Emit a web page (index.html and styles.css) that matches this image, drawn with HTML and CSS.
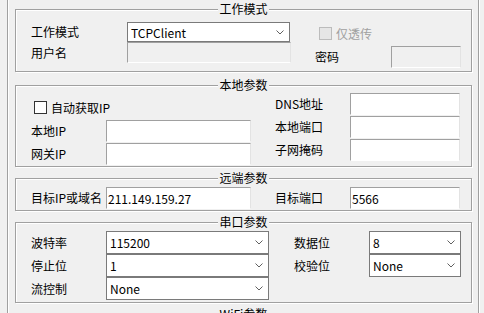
FILE: index.html
```html
<!DOCTYPE html>
<html lang="zh-CN">
<head>
    <meta charset="UTF-8">
    <meta name="viewport" content="width=device-width, initial-scale=1.0">
    <title>参数设置</title>
    <link rel="stylesheet" href="styles.css">
</head>
<body>

<div class="panel">

    <!-- 工作模式 -->
    <div class="group">
        <div class="group-title">工作模式</div>
        <div class="group-body g-work">
            <div class="col">
                <div class="field">
                    <label class="lbl lbl-wide">工作模式</label>
                    <div class="combo combo-mode"><span>TCPClient</span><svg width="8" height="5" viewBox="0 0 8 5"><polyline points="0.5,0.5 4,4 7.5,0.5" fill="none" stroke="#606060" stroke-width="1"/></svg></div>
                </div>
                <div class="field">
                    <label class="lbl lbl-wide">用户名</label>
                    <input type="text" class="edit edit-user" disabled>
                </div>
            </div>
            <div class="col col-right-work">
                <label class="check check-disabled check-trans"><span class="box"></span>仅透传</label>
                <div class="field field-pwd">
                    <label class="lbl lbl-pwd">密码</label>
                    <input type="text" class="edit edit-pwd" disabled>
                </div>
            </div>
        </div>
    </div>

    <!-- 本地参数 -->
    <div class="group">
        <div class="group-title">本地参数</div>
        <div class="group-body g-local">
            <div class="col">
                <label class="check check-auto"><span class="box"></span>自动获取IP</label>
                <div class="stack stack-local">
                    <div class="field">
                        <label class="lbl">本地IP</label>
                        <input type="text" class="edit edit-left">
                    </div>
                    <div class="field">
                        <label class="lbl">网关IP</label>
                        <input type="text" class="edit edit-left">
                    </div>
                </div>
            </div>
            <div class="col col-right">
                <div class="stack">
                    <div class="field">
                        <label class="lbl">DNS地址</label>
                        <input type="text" class="edit edit-right">
                    </div>
                    <div class="field">
                        <label class="lbl">本地端口</label>
                        <input type="text" class="edit edit-right">
                    </div>
                    <div class="field">
                        <label class="lbl">子网掩码</label>
                        <input type="text" class="edit edit-right">
                    </div>
                </div>
            </div>
        </div>
    </div>

    <!-- 远端参数 -->
    <div class="group">
        <div class="group-title">远端参数</div>
        <div class="group-body g-remote">
            <div class="col">
                <div class="field">
                    <label class="lbl">目标IP或域名</label>
                    <input type="text" class="edit edit-left" value="211.149.159.27">
                </div>
            </div>
            <div class="col col-right">
                <div class="field">
                    <label class="lbl">目标端口</label>
                    <input type="text" class="edit edit-right" value="5566">
                </div>
            </div>
        </div>
    </div>

    <!-- 串口参数 -->
    <div class="group">
        <div class="group-title">串口参数</div>
        <div class="group-body g-serial">
            <div class="col">
                <div class="field">
                    <label class="lbl">波特率</label>
                    <div class="combo combo-left"><span>115200</span><svg width="8" height="5" viewBox="0 0 8 5"><polyline points="0.5,0.5 4,4 7.5,0.5" fill="none" stroke="#606060" stroke-width="1"/></svg></div>
                </div>
                <div class="field">
                    <label class="lbl">停止位</label>
                    <div class="combo combo-left"><span>1</span><svg width="8" height="5" viewBox="0 0 8 5"><polyline points="0.5,0.5 4,4 7.5,0.5" fill="none" stroke="#606060" stroke-width="1"/></svg></div>
                </div>
                <div class="field">
                    <label class="lbl">流控制</label>
                    <div class="combo combo-left"><span>None</span><svg width="8" height="5" viewBox="0 0 8 5"><polyline points="0.5,0.5 4,4 7.5,0.5" fill="none" stroke="#606060" stroke-width="1"/></svg></div>
                </div>
            </div>
            <div class="col col-right-serial">
                <div class="field">
                    <label class="lbl">数据位</label>
                    <div class="combo combo-right"><span>8</span><svg width="8" height="5" viewBox="0 0 8 5"><polyline points="0.5,0.5 4,4 7.5,0.5" fill="none" stroke="#606060" stroke-width="1"/></svg></div>
                </div>
                <div class="field">
                    <label class="lbl">校验位</label>
                    <div class="combo combo-right"><span>None</span><svg width="8" height="5" viewBox="0 0 8 5"><polyline points="0.5,0.5 4,4 7.5,0.5" fill="none" stroke="#606060" stroke-width="1"/></svg></div>
                </div>
            </div>
        </div>
    </div>

    <!-- WiFi参数 -->
    <div class="group">
        <div class="group-title">WiFi参数</div>
        <div class="group-body g-wifi"></div>
    </div>

</div>

</body>
</html>
```

FILE: styles.css
```css
/* 参数设置面板 */
body {
    margin: 0;
    background-color: #f0f0f0;
    font-family: "Noto Sans CJK SC", "Noto Sans", sans-serif;
    font-size: 12px;
    color: #000;
    overflow: hidden;
}
.panel {
    box-sizing: border-box;
    width: 472px;
    height: 313px;
    margin-left: 7px;
    padding-top: 9px;
    border-left: 1px solid #a0a0a0;
    border-right: 1px solid #a0a0a0;
    box-shadow: inset 1px 0 0 #fff, 1px 0 0 #fff;
    overflow: hidden;
}

/* 分组框 */
.group {
    box-sizing: border-box;
    width: 457px;
    margin-left: 7px;
    border: 1px solid #a0a0a0;
    box-shadow: inset 1px 1px 0 #fff, 1px 1px 0 #fff;
}
.group + .group {
    margin-top: 11px;
}
.group:nth-child(2) {
    margin-top: 13px;
}
.group-title {
    display: table;
    margin: -9px auto 0;
    padding: 0 1px;
    line-height: 16px;
    background-color: #f0f0f0;
}
.group-body {
    display: flex;
    align-items: flex-start;
    padding-left: 15px;
}
.col {
    display: flex;
    flex-direction: column;
}
.col-right {
    margin-left: 24px;
}
.col-right-serial {
    margin-left: 25px;
}
.col-right-work {
    margin-left: 24px;
}

/* 行 */
.stack {
    display: flex;
    flex-direction: column;
    gap: 1px;
}
.field {
    display: flex;
    align-items: center;
}
.lbl {
    width: 75px;
    flex-shrink: 0;
    white-space: nowrap;
    line-height: 16px;
}
.lbl-wide {
    width: 96px;
}
.lbl-pwd {
    width: 76px;
}

/* 输入框 */
.edit {
    box-sizing: border-box;
    height: 22px;
    margin: 0;
    padding: 0 1px;
    border: 1px solid;
    border-color: #a0a0a0 #e3e3e3 #fff #a0a0a0;
    background-color: #fff;
    font-family: inherit;
    font-size: 12px;
    color: #000;
    outline: none;
}
.edit:disabled {
    background-color: #f0f0f0;
}
.edit-left {
    width: 145px;
}
.edit-right {
    width: 110px;
}
.edit-user {
    width: 164px;
    height: 21px;
}
.edit-pwd {
    width: 70px;
}

/* 下拉框 */
.combo {
    box-sizing: border-box;
    display: flex;
    align-items: center;
    justify-content: space-between;
    height: 23px;
    padding: 0 5px 0 3px;
    border: 1px solid #7a7a7a;
    background-color: #fff;
}
.combo svg {
    display: block;
}
.combo-mode {
    width: 163px;
    height: 20px;
}
.combo-left {
    width: 163px;
}
.combo-right {
    width: 92px;
}

/* 复选框 */
.check {
    display: flex;
    align-items: center;
    gap: 4px;
    height: 13px;
    line-height: 16px;
}
.check .box {
    box-sizing: border-box;
    width: 13px;
    height: 13px;
    border: 1px solid #333;
    background-color: #fff;
}
.check-disabled {
    color: #a0a0a0;
}
.check-disabled .box {
    border-color: #bcbcbc;
    background-color: #e6e6e6;
}
.check-trans {
    margin: 5px 0 0 4px;
}
.field-pwd {
    margin-top: 6px;
}
.check-auto {
    margin: 8px 0 0 3px;
}
.stack-local {
    margin-top: 6px;
}

/* 各组间距 */
.g-work {
    padding-top: 5px;
    padding-bottom: 3px;
}
.g-local {
    padding-bottom: 1px;
}
.g-remote {
    padding-top: 1px;
    padding-bottom: 1px;
}
.g-serial {
    padding-top: 1px;
    padding-bottom: 2px;
}
.g-wifi {
    height: 60px;
}
```
